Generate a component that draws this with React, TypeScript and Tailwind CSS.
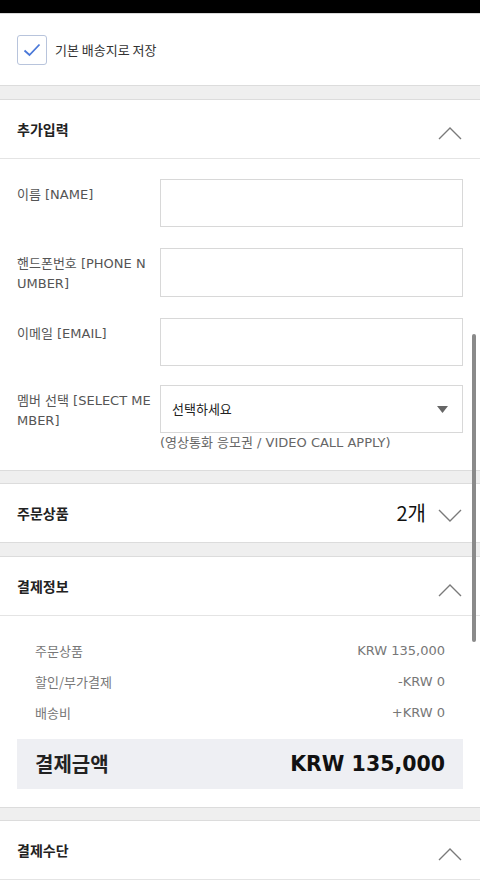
import type { ReactNode } from 'react'

// 라틴 글자는 DejaVu(버다나 비슷), 한글은 Noto CJK KR로 떨어짐
const kr = "font-['DejaVu_Sans','Noto_Sans_CJK_KR',sans-serif]"
const noto = "font-['Noto_Sans_CJK_KR',sans-serif]"

function Chevron({ up }: { up: boolean }) {
  return (
    <svg width="24" height="14" viewBox="0 0 24 14" fill="none">
      <path
        d={up ? 'M1 13 L12 2 L23 13' : 'M1 1 L12 12 L23 1'}
        stroke="#7a7a7a"
        strokeWidth="1.4"
      />
    </svg>
  )
}

function Band({ tall }: { tall?: boolean }) {
  return (
    <div
      className={`${tall ? 'h-[15px]' : 'h-[14px]'} bg-[#efefef] border-y border-[#dcdcdc]`}
    />
  )
}

function SectionHeader({ title, right, up }: { title: string; right?: ReactNode; up: boolean }) {
  return (
    <div className="h-[58px] flex items-center justify-between pl-[17px] pr-[18px]">
      <span className={`text-[14px] font-bold text-[#222] ${noto}`}>{title}</span>
      <div className="flex items-center gap-[12px]">
        {right}
        <div className={up ? 'mt-[8px]' : 'mt-[6px]'}>
          <Chevron up={up} />
        </div>
      </div>
    </div>
  )
}

function Field({ label, children, className = '' }: { label: string; children: ReactNode; className?: string }) {
  return (
    <div className={`flex ${className}`}>
      <div className="w-[143px] pt-[6px] pr-[8px] text-[13px] leading-[20px] text-[#555] break-all">
        {label}
      </div>
      <div className="flex-1">{children}</div>
    </div>
  )
}

export default function App() {
  const rows = [
    ['주문상품', 'KRW 135,000'],
    ['할인/부가결제', '-KRW 0'],
    ['배송비', '+KRW 0'],
  ]

  return (
    <div className={`relative h-[883px] w-full overflow-hidden bg-white ${kr}`}>
      <div className="h-[14px] bg-black border-b border-[#d8d8d8]" />

      {/* 기본 배송지 */}
      <div className="h-[71px] flex items-center gap-[8px] px-[17px]">
        <div className="w-[30px] h-[30px] rounded-[3px] border border-[#b8c4dc] flex items-center justify-center">
          <svg width="18" height="14" viewBox="0 0 18 14" fill="none">
            <path d="M1.5 7.5 L6.5 12 L16.5 1.5" stroke="#4a78d8" strokeWidth="1.8" />
          </svg>
        </div>
        <span className={`text-[13px] text-[#333] ${noto}`}>기본 배송지로 저장</span>
      </div>

      <Band tall />

      {/* 추가입력 */}
      <div className="border-b border-[#e4e4e4]">
        <SectionHeader title="추가입력" up />
      </div>
      <div className="pt-[20px] pb-[18px] pl-[17px] pr-[17px] flex flex-col gap-[21px]">
        <Field label="이름 [NAME]">
          <div className="h-[48px] border border-[#d8d8d8]" />
        </Field>
        <Field label="핸드폰번호 [PHONE NUMBER]">
          <div className="h-[49px] border border-[#d8d8d8]" />
        </Field>
        <Field label="이메일 [EMAIL]">
          <div className="h-[48px] border border-[#d8d8d8]" />
        </Field>
        <Field label="멤버 선택 [SELECT MEMBER]" className="-mt-[2px]">
          <div className="h-[48px] border border-[#d8d8d8] flex items-center justify-between pl-[11px] pr-[14px]">
            <span className={`text-[13px] text-[#222] ${noto}`}>선택하세요</span>
            <svg width="11" height="7" viewBox="0 0 11 7">
              <path d="M0 0 H11 L5.5 7 Z" fill="#666" />
            </svg>
          </div>
          <div className="mt-[1px] text-[13px] leading-[18px] text-[#666]">
            (영상통화 응모권 / VIDEO CALL APPLY)
          </div>
        </Field>
      </div>

      <Band />

      {/* 주문상품 */}
      <SectionHeader
        title="주문상품"
        up={false}
        right={<span className={`text-[20px] text-[#111] leading-none ${noto}`}>2개</span>}
      />

      <Band tall />

      {/* 결제정보 */}
      <div className="border-b border-[#e4e4e4]">
        <SectionHeader title="결제정보" up />
      </div>
      <div className="pt-[19px] pb-[18px] px-[17px]">
        <div className="px-[18px]">
          {rows.map(([k, v]) => (
            <div key={k} className="h-[31px] flex items-center justify-between text-[13px] text-[#777]">
              <span className={noto}>{k}</span>
              <span>{v}</span>
            </div>
          ))}
        </div>
        <div className="mt-[11px] h-[50px] bg-[#eeeff3] flex items-center justify-between px-[18px]">
          <span className={`text-[20px] font-bold text-[#222] ${noto}`}>결제금액</span>
          <span className="text-[20.5px] font-extrabold text-[#111]">KRW 135,000</span>
        </div>
      </div>

      <Band />

      {/* 결제수단 */}
      <div className="border-b border-[#e4e4e4]">
        <SectionHeader title="결제수단" up />
      </div>

      {/* overlay scrollbar */}
      <div className="absolute right-[4px] top-[334px] w-[4px] h-[308px] rounded-full bg-[#8a8a8a]" />
    </div>
  )
}
